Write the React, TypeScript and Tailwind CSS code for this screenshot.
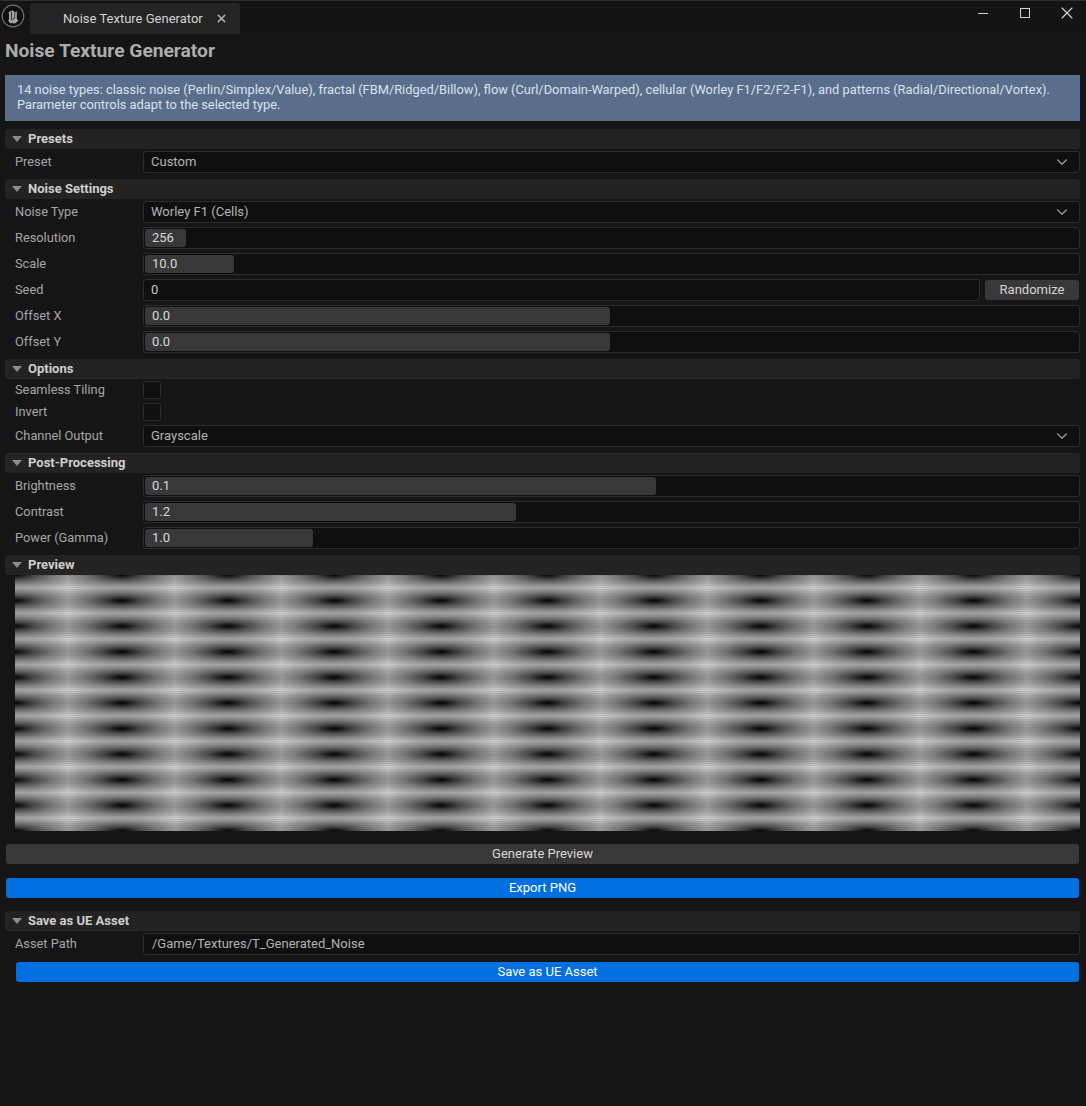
import React from "react";
import { ChevronDown, X } from "lucide-react";

const font = "font-['Roboto','Liberation_Sans',sans-serif]";

function SectionHeader({ title, className = "" }: { title: string; className?: string }) {
  return (
    <div className={`ml-[5px] mr-[6px] flex h-5 items-center rounded-[3px] bg-[#232323] pl-[7px] ${className}`}>
      <span className="h-0 w-0 border-x-[5px] border-t-[6px] border-x-transparent border-t-[#8c8c8c]" />
      <span className="ml-[6px] text-[13px] font-bold text-[#cfcfcf]">{title}</span>
    </div>
  );
}

function Row({ label, children, className = "h-[22px]" }: { label: string; children: React.ReactNode; className?: string }) {
  return (
    <div className={`ml-[15px] mr-[6px] flex items-center ${className}`}>
      <span className="w-[128px] shrink-0 text-[12.8px] text-[#a6a6a6]">{label}</span>
      {children}
    </div>
  );
}

function Field({ children, className = "" }: { children?: React.ReactNode; className?: string }) {
  return (
    <div className={`flex h-[22px] min-w-0 flex-1 items-center rounded-[3px] border border-[#2d2d2d] bg-[#0f0f0f] ${className}`}>
      {children}
    </div>
  );
}

function Combo({ value }: { value: string }) {
  return (
    <Field className="justify-between pl-[7px] pr-2">
      <span className="text-[13px] text-[#b4b4b4]">{value}</span>
      <ChevronDown className="size-[18px] text-[#a0a0a0]" strokeWidth={1.5} />
    </Field>
  );
}

function Slider({ value, fill }: { value: string; fill: number }) {
  return (
    <Field className="p-px">
      <div
        className="flex h-[18px] items-center rounded-[3px] bg-[#383838] pl-[7px] text-[13px] text-[#d8d8d8]"
        style={{ width: fill }}
      >
        {value}
      </div>
    </Field>
  );
}

function Check() {
  return <div className="size-[18px] rounded-[3px] border border-[#2d2d2d] bg-[#0f0f0f]" />;
}

function UnrealLogo() {
  return (
    <svg width="24" height="24" viewBox="0 0 24 24" className="ml-px mt-[3px] shrink-0 self-start">
      <circle cx="12" cy="12" r="10.8" fill="#0e0e0e" stroke="#6e6e6e" strokeWidth="1.2" />
      <path
        d="M7 9.500C8 8 9.600 7 11 6.600C12.400 6.800 13.400 7.500 14.200 8.400L16.600 7C16 7.800 15.800 8.400 15.800 9.200V15.200L17.400 16.400C16.200 18 14.600 19.200 12.800 19.800L11.400 18.400L10 19.600C8.600 18.800 7.400 17.400 7.200 15.600L8 16V9.600C8 9.200 7.600 9 7 9.500Z"
        fill="#a8a8a8"
      />
      <path d="M10.400 7.800V15.200C10.400 16 11 16.200 11.600 15.700L13.200 14.400" fill="none" stroke="#0e0e0e" strokeWidth="0.9" />
      <path d="M13.600 8.400V15" fill="none" stroke="#0e0e0e" strokeWidth="0.7" />
    </svg>
  );
}

function NoisePreview() {
  return (
    <svg className="ml-[15px] block h-[256px] w-[1065px]" viewBox="0 0 1065 256">
      <defs>
        <radialGradient id="cell" cx="0.5" cy="0.5" r="0.7071">
          <stop offset="0" stopColor="#000000" />
          <stop offset="0.25" stopColor="#484848" />
          <stop offset="0.5" stopColor="#7a7a7a" />
          <stop offset="0.7071" stopColor="#989898" />
          <stop offset="1" stopColor="#c8c8c8" />
        </radialGradient>
        <linearGradient id="band" x1="0" y1="0" x2="0" y2="1">
          <stop offset="0" stopColor="#ffffff" stopOpacity="0.14" />
          <stop offset="0.25" stopColor="#ffffff" stopOpacity="0.04" />
          <stop offset="0.5" stopColor="#ffffff" stopOpacity="0" />
          <stop offset="0.75" stopColor="#ffffff" stopOpacity="0.04" />
          <stop offset="1" stopColor="#ffffff" stopOpacity="0.14" />
        </linearGradient>
        <pattern id="cells" x="-53.25" y="-12.8" width="106.5" height="25.6" patternUnits="userSpaceOnUse">
          <rect width="106.5" height="25.6" fill="url(#cell)" />
          <rect width="106.5" height="25.6" fill="url(#band)" />
        </pattern>
        <pattern id="scan" width="2" height="2" patternUnits="userSpaceOnUse">
          <rect width="2" height="1" fill="#000000" fillOpacity="0.05" />
        </pattern>
      </defs>
      <rect width="1065" height="256" fill="url(#cells)" />
      <rect width="1065" height="256" fill="url(#scan)" />
    </svg>
  );
}

export default function App() {
  return (
    <div className={`${font} h-[1106px] w-[1086px] overflow-hidden bg-[#151515]`}>
      <div className="flex h-[34px] items-end border-t border-[#2e2e2e] bg-[#141414]">
        <UnrealLogo />
        <div className="ml-[5px] flex h-[31px] w-[210px] items-center rounded-t-[3px] bg-[#242424] pl-[33px]">
          <span className="text-[13px] text-[#d4d4d4]">Noise Texture Generator</span>
          <X className="ml-[12px] size-[13px] text-[#b0b0b0]" strokeWidth={3} />
        </div>
        <div className="ml-auto flex h-full items-start self-start">
          <div className="mr-[32px] mt-[12px] h-px w-[10px] bg-[#cfcfcf]" />
          <div className="mr-[27px] mt-[7px] size-[10px] border border-[#cfcfcf]" />
          <X className="mr-[9px] mt-[2px] size-5 text-[#cfcfcf]" strokeWidth={1.4} />
        </div>
      </div>

      <h1 className="ml-[5px] mt-[5px] text-[19.2px] leading-[24px] font-bold text-[#adadad]">Noise Texture Generator</h1>

      <div className="ml-[5px] mr-[6px] mt-[12px] h-[46px] bg-[#5a6e8c] px-3 pt-[7px] text-[12.85px] leading-[15px] text-[#d9e2ee]">
        14 noise types: classic noise (Perlin/Simplex/Value), fractal (FBM/Ridged/Billow), flow (Curl/Domain-Warped), cellular (Worley F1/F2/F2-F1), and patterns (Radial/Directional/Vortex).
        <br />
        Parameter controls adapt to the selected type.
      </div>

      <SectionHeader title="Presets" className="mt-2" />
      <Row label="Preset" className="mt-[2px] h-[22px]">
        <Combo value="Custom" />
      </Row>

      <SectionHeader title="Noise Settings" className="mt-[6px]" />
      <Row label="Noise Type" className="mt-[2px] h-[22px]">
        <Combo value="Worley F1 (Cells)" />
      </Row>
      <Row label="Resolution" className="mt-1 h-[22px]">
        <Slider value="256" fill={41} />
      </Row>
      <Row label="Scale" className="mt-1 h-[22px]">
        <Slider value="10.0" fill={89} />
      </Row>
      <Row label="Seed" className="mt-1 h-[22px]">
        <Field className="pl-[7px] text-[13px] text-[#c8c8c8]">0</Field>
        <button className="ml-[5px] mr-px h-5 w-[94px] shrink-0 rounded-[3px] bg-[#383838] text-[13px] text-[#d4d4d4]">
          Randomize
        </button>
      </Row>
      <Row label="Offset X" className="mt-1 h-[22px]">
        <Slider value="0.0" fill={465} />
      </Row>
      <Row label="Offset Y" className="mt-1 h-[22px]">
        <Slider value="0.0" fill={465} />
      </Row>

      <SectionHeader title="Options" className="mt-[6px]" />
      <Row label="Seamless Tiling" className="mt-[2px] h-[18px]">
        <Check />
      </Row>
      <Row label="Invert" className="mt-1 h-[18px]">
        <Check />
      </Row>
      <Row label="Channel Output" className="mt-1 h-[22px]">
        <Combo value="Grayscale" />
      </Row>

      <SectionHeader title="Post-Processing" className="mt-[6px]" />
      <Row label="Brightness" className="mt-[2px] h-[22px]">
        <Slider value="0.1" fill={511} />
      </Row>
      <Row label="Contrast" className="mt-1 h-[22px]">
        <Slider value="1.2" fill={371} />
      </Row>
      <Row label="Power (Gamma)" className="mt-1 h-[22px]">
        <Slider value="1.0" fill={168} />
      </Row>

      <SectionHeader title="Preview" className="mt-[6px]" />
      <NoisePreview />

      <button className="ml-[6px] mt-[13px] block h-5 w-[1073px] rounded-[3px] bg-[#383838] text-[13px] text-[#d8d8d8]">
        Generate Preview
      </button>
      <button className="ml-[6px] mt-[14px] block h-5 w-[1073px] rounded-[3px] bg-[#0070e0] text-[13px] text-white">
        Export PNG
      </button>

      <SectionHeader title="Save as UE Asset" className="mt-[13px]" />
      <Row label="Asset Path" className="mt-[2px] h-[22px]">
        <Field className="pl-2 text-[13px] text-[#b4b4b4]">/Game/Textures/T_Generated_Noise</Field>
      </Row>
      <button className="ml-4 mt-[7px] block h-5 w-[1063px] rounded-[3px] bg-[#0070e0] text-[13px] text-white">
        Save as UE Asset
      </button>
    </div>
  );
}
